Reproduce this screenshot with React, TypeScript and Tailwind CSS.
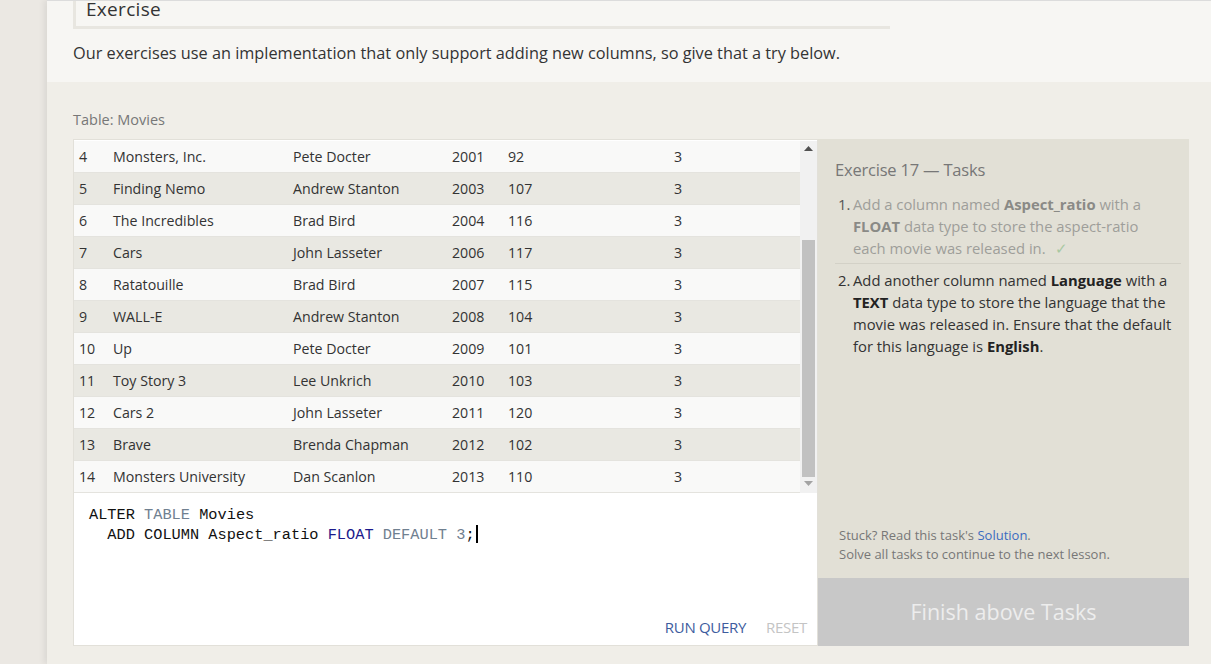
import React from "react";

const movies = [
  [4, "Monsters, Inc.", "Pete Docter", 2001, 92],
  [5, "Finding Nemo", "Andrew Stanton", 2003, 107],
  [6, "The Incredibles", "Brad Bird", 2004, 116],
  [7, "Cars", "John Lasseter", 2006, 117],
  [8, "Ratatouille", "Brad Bird", 2007, 115],
  [9, "WALL-E", "Andrew Stanton", 2008, 104],
  [10, "Up", "Pete Docter", 2009, 101],
  [11, "Toy Story 3", "Lee Unkrich", 2010, 103],
  [12, "Cars 2", "John Lasseter", 2011, 120],
  [13, "Brave", "Brenda Chapman", 2012, 102],
  [14, "Monsters University", "Dan Scanlon", 2013, 110],
];

const sans = "font-['Open_Sans','Noto_Sans',sans-serif]";

export default function App() {
  return (
    <div className={`flex h-[664px] w-full overflow-hidden bg-[#ebe8e3] ${sans}`}>
      {/* left gutter */}
      <div className="w-[47px] shrink-0 bg-[#ebe8e3]" />

      <main className="flex flex-1 flex-col shadow-[-3px_0_6px_rgba(0,0,0,0.07)] border-t border-[#dcdcdc]">
        {/* lesson intro */}
        <section className="h-[81px] shrink-0 bg-[#f7f6f3] pl-[26px]">
          <div className="h-[28px] w-[817px] border-b-[3px] border-l-[3px] border-[#e8e6e0] pl-[10px] text-[19px] leading-[17px] tracking-[0.3px] text-[#333]">
            Exercise
          </div>
          <p className="mt-[13px] text-[16.3px] leading-[22px] text-[#333]">
            Our exercises use an implementation that only support adding new columns, so give that a try below.
          </p>
        </section>

        {/* exercise area */}
        <section className="flex-1 bg-[#f0eee8] pl-[26px] pr-[22px]">
          <div className="pt-[28px] text-[14.5px] leading-[20px] text-[#777]">Table: Movies</div>

          <div className="mt-[9px] flex h-[507px]">
            {/* table + editor */}
            <div className="flex w-[745px] flex-col border border-[#e2e0d9] bg-white">
              <div className="flex h-[353px] shrink-0 pt-[1px]">
                <div className="flex-1">
                  {movies.map((m, i) => (
                    <div
                      key={m[0]}
                      className={`grid h-[32px] grid-cols-[34px_180px_159px_56px_166px_1fr] items-center border-b border-[#e4e3de] pl-[5px] text-[14.2px] text-[#333] ${
                        i % 2 === 0 ? "bg-[#f9f9f8]" : "bg-[#e9e8e2]"
                      }`}
                    >
                      <span>{m[0]}</span>
                      <span>{m[1]}</span>
                      <span>{m[2]}</span>
                      <span>{m[3]}</span>
                      <span>{m[4]}</span>
                      <span>3</span>
                    </div>
                  ))}
                </div>
                {/* scrollbar */}
                <div className="flex w-[17px] flex-col items-center bg-[#f1f1f1]">
                  <svg width="9" height="6" viewBox="0 0 9 6" className="mt-[5px]">
                    <path d="M0 5 L4.5 0 L9 5 Z" fill="#505050" />
                  </svg>
                  <div className="mt-[88px] h-[237px] w-[13px] bg-[#c1c1c1]" />
                  <svg width="9" height="6" viewBox="0 0 9 6" className="mt-[4px]">
                    <path d="M0 0 L4.5 5 L9 0 Z" fill="#a3a3a3" />
                  </svg>
                </div>
              </div>

              {/* editor */}
              <div className="flex flex-1 flex-col justify-between pl-[15px] pr-[10px] pt-[12px] pb-[8px]">
                <pre className="font-['Liberation_Mono','DejaVu_Sans_Mono',monospace] text-[15.3px] leading-[20px] text-[#111]">
                  ALTER <span className="text-[#708090]">TABLE</span> Movies{"\n"}
                  {"  "}ADD COLUMN Aspect_ratio <span className="text-[#1c1a8c]">FLOAT</span>{" "}
                  <span className="text-[#708090]">DEFAULT</span>{" "}
                  <span className="text-[#708090]">3</span>;
                  <span className="ml-[1px] inline-block h-[18px] w-[2px] align-[-4px] bg-black" />
                </pre>
                <div className="flex justify-end gap-[20px] text-[15px] leading-[20px] tracking-[-0.3px]">
                  <span className="text-[#3d5c9e]">RUN QUERY</span>
                  <span className="text-[#c4c4c4]">RESET</span>
                </div>
              </div>
            </div>

            {/* tasks panel */}
            <div className="flex w-[371px] flex-col bg-[#e2e0d6]">
              <div className="flex flex-1 flex-col pl-[17px] pr-[8px] pt-[19px]">
                <h3 className="text-[16.5px] leading-[24px] tracking-[-0.2px] text-[#777]">Exercise 17 — Tasks</h3>
                <ol className="mt-[11px] text-[14.8px] leading-[22px]">
                  <li className="flex border-b border-[#d3d1c7] pb-[4px] text-[#9e9e9a]">
                    <span className="w-[18px] shrink-0 pl-[3px] text-[#555]">1.</span>
                    <span>
                      Add a column named <b className="text-[#8a8a86]">Aspect_ratio</b> with a
                      <br />
                      <b className="text-[#8a8a86]">FLOAT</b> data type to store the aspect-ratio
                      <br />
                      each movie was released in. <span className="ml-[6px] text-[#a9c8a2]">✓</span>
                    </span>
                  </li>
                  <li className="flex pt-[5px] text-[#333]">
                    <span className="w-[18px] shrink-0 pl-[3px]">2.</span>
                    <span>
                      Add another column named <b className="text-[#222]">Language</b> with a
                      <br />
                      <b className="text-[#222]">TEXT</b> data type to store the language that the
                      <br />
                      movie was released in. Ensure that the default
                      <br />
                      for this language is <b className="text-[#222]">English</b>.
                    </span>
                  </li>
                </ol>
                <div className="mt-auto pb-[14px] pl-[4px] text-[13px] leading-[19px] text-[#777]">
                  <div>
                    Stuck? Read this task's <span className="text-[#3b6bc0]">Solution</span>.
                  </div>
                  <div>Solve all tasks to continue to the next lesson.</div>
                </div>
              </div>
              <div className="flex h-[68px] shrink-0 items-center justify-center bg-[#c8c8c8] text-[21.5px] text-[#ededed]">
                Finish above Tasks
              </div>
            </div>
          </div>
        </section>
      </main>
    </div>
  );
}
